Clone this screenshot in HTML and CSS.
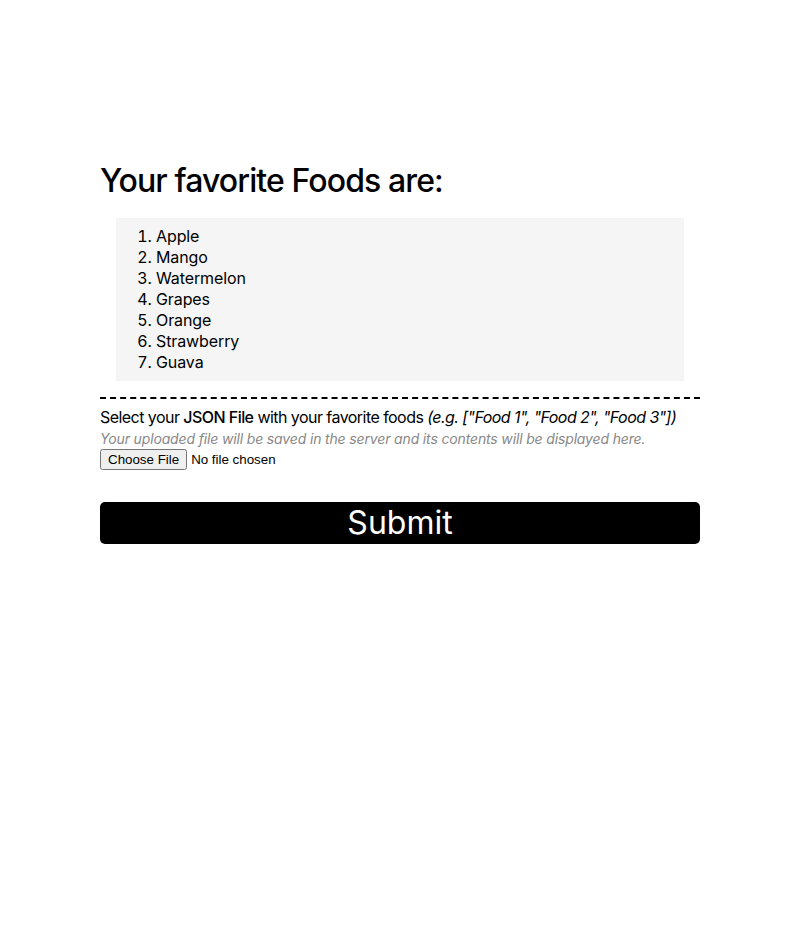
FILE: index.html
```html
<!DOCTYPE html>
<html>
<head>
<meta charset="utf-8">
<link rel="stylesheet" href="styles.css">
</head>
<body>
<main class="container">
  <h1 class="title">Your favorite Foods are:</h1>
  <ol class="foods">
    <li>Apple</li>
    <li>Mango</li>
    <li>Watermelon</li>
    <li>Grapes</li>
    <li>Orange</li>
    <li>Strawberry</li>
    <li>Guava</li>
  </ol>
  <form class="upload">
    <label class="label">Select your <strong>JSON File</strong> with your favorite foods <em>(e.g. ["Food 1", "Food 2", "Food 3"])</em></label>
    <p class="hint">Your uploaded file will be saved in the server and its contents will be displayed here.</p>
    <input class="file" type="file">
    <button class="submit" type="button">Submit</button>
  </form>
</main>
</body>
</html>
```
FILE: styles.css
```css
html, body {
  margin: 0;
  padding: 0;
  background: #fff;
}
body {
  font-family: Inter, "Open Sans", sans-serif;
  color: #000;
}
.container {
  width: 600px;
  margin: 0 auto;
  padding-top: 161px;
}
.title {
  font-size: 32px;
  font-weight: 500;
  line-height: 40px;
  margin: 0 0 17px 0;
  letter-spacing: -0.9px;
}
.foods {
  margin: 0 16px 16px 16px;
  padding: 8px 0 8px 40px;
  background: #f5f5f5;
  font-size: 16px;
  line-height: 21px;
  letter-spacing: -0.1px;
}
.upload {
  border-top: 2px dashed #000;
  padding-top: 8px;
  display: flex;
  flex-direction: column;
  align-items: flex-start;
}
.label {
  font-size: 16px;
  line-height: 21px;
  letter-spacing: -0.55px;
  white-space: nowrap;
}
.label strong {
  font-weight: 500;
}
.hint {
  margin: 0;
  font-size: 14px;
  line-height: 21px;
  font-style: italic;
  color: #888;
  letter-spacing: -0.15px;
}
.file {
  margin: 0;
}
.submit {
  margin-top: 32px;
  width: 600px;
  height: 42px;
  background: #000;
  color: #fff;
  border: none;
  border-radius: 5px;
  font-family: Inter, "Open Sans", sans-serif;
  font-size: 32px;
  font-weight: 400;
  line-height: 42px;
  padding: 0;
}
```
